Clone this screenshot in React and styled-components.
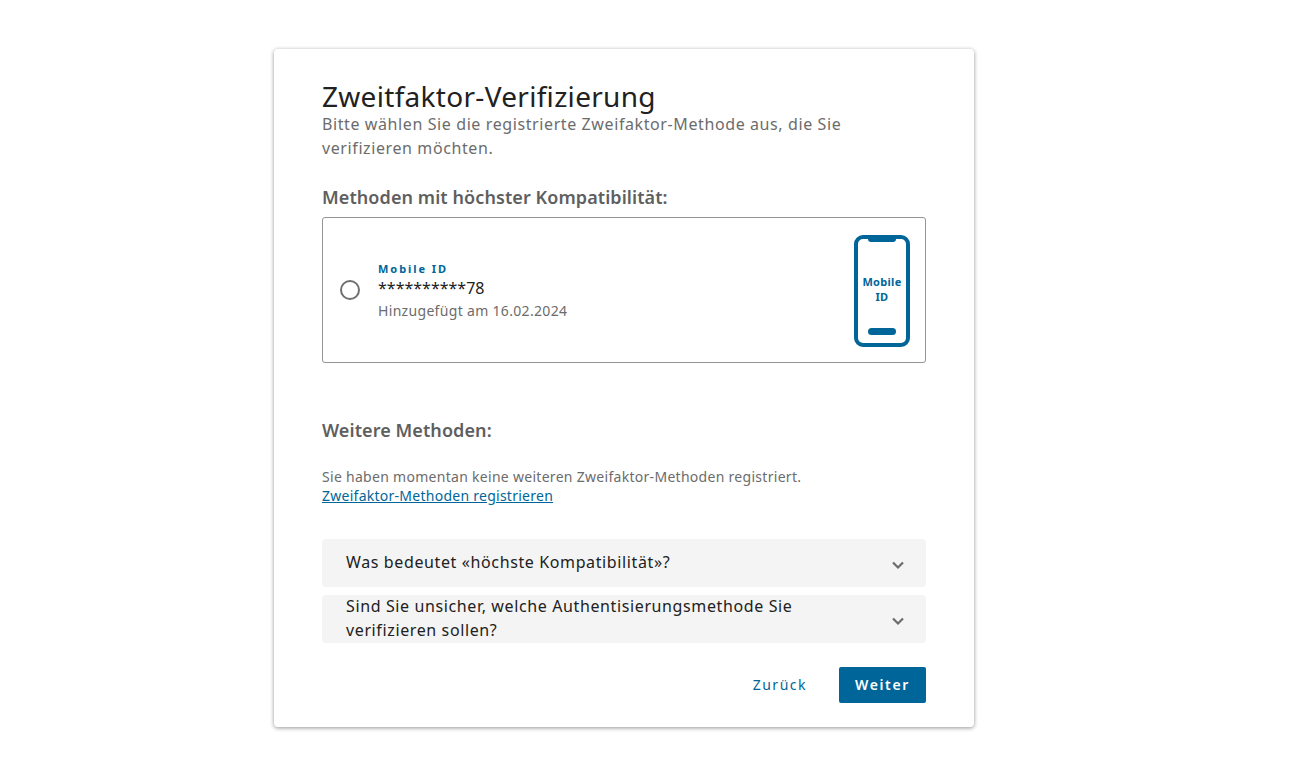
import React from "react";
import styled, { createGlobalStyle } from "styled-components";

const Global = createGlobalStyle`
  html, body { margin: 0; padding: 0; background: #fff; }
  body { font-family: "Noto Sans", "Open Sans", sans-serif; }
`;
const Page = styled.div`
  width: 100%;
  min-height: 759px;
  box-sizing: border-box;
  padding: 49px 0 0 274px;
  display: flex;
  justify-content: flex-start;
`;
const Card = styled.main`
  width: 700px;
  height: 678px;
  flex: none;
  box-sizing: border-box;
  background: #fff;
  border-radius: 4px;
  box-shadow: 0 1px 4px rgba(0,0,0,.42);
  padding: 31px 48px 24px;
  display: flex;
  flex-direction: column;
`;
const Title = styled.h1`
  margin: 0;
  font-size: 28px;
  line-height: 32px;
  font-weight: 400;
  color: #212121;
  letter-spacing: .3px;
`;
const Lead = styled.p`
  margin: 0;
  font-size: 16px;
  line-height: 24px;
  color: #6c6c6c;
  letter-spacing: .6px;
`;
const SectionTitle = styled.h2`
  margin: ${p => p.$top}px 0 0;
  font-size: 18px;
  line-height: 24px;
  font-weight: 600;
  color: #5f5f5f;
  letter-spacing: .08px;
`;
const MethodCard = styled.label`
  margin-top: 8px;
  height: 146px;
  flex: none;
  box-sizing: border-box;
  border: 1px solid #949494;
  border-radius: 3px;
  display: flex;
  align-items: center;
  padding: 0 15px 0 17px;
`;
const Radio = styled.span`
  width: 20px;
  height: 20px;
  box-sizing: border-box;
  border: 2px solid #707070;
  border-radius: 50%;
  flex: none;
`;
const MethodText = styled.div`
  flex: 1;
  margin-left: 18px;
  margin-top: 2px;
  display: flex;
  flex-direction: column;
`;
const MethodName = styled.div`
  font-size: 11px;
  line-height: 14px;
  font-weight: 700;
  letter-spacing: 1.95px;
  color: #006699;
`;
const MethodNumber = styled.div`
  font-size: 16px;
  line-height: 20px;
  margin-top: 2px;
  color: #212121;
`;
const MethodDate = styled.div`
  font-size: 14px;
  line-height: 20px;
  margin-top: 3px;
  color: #6c6c6c;
  letter-spacing: .32px;
`;
const Phone = styled.svg`
  flex: none;
  width: 56px;
  height: 112px;
  margin-top: 2px;
  display: block;
`;
const PhoneLabel = styled.text`
  font-family: "Noto Sans", sans-serif;
  font-size: 11px;
  font-weight: 700;
  letter-spacing: .3px;
  fill: #006699;
  text-anchor: middle;
`;
const Note = styled.p`
  margin: 25px 0 0;
  font-size: 14px;
  line-height: 19px;
  color: #6c6c6c;
  letter-spacing: .29px;
`;
const RegisterLink = styled.a`
  display: block;
  font-size: 14px;
  line-height: 19px;
  color: #006699;
  text-decoration: underline;
  letter-spacing: .26px;
`;
const Accordion = styled.div`
  margin-top: 34px;
  display: flex;
  flex-direction: column;
  gap: 8px;
`;
const AccordionItem = styled.div`
  height: 48px;
  flex: none;
  box-sizing: border-box;
  background: #f4f4f4;
  border-radius: 4px;
  padding: 0 20px 0 24px;
  display: flex;
  align-items: center;
  justify-content: space-between;
`;
const AccordionText = styled.span`
  max-width: 480px;
  font-size: 16px;
  line-height: 24px;
  margin-top: -2px;
  color: #212121;
  letter-spacing: .62px;
`;
const Chevron = styled.svg`
  flex: none;
  width: 16px;
  height: 16px;
  margin-top: 3px;
`;
const Actions = styled.div`
  margin-top: 24px;
  display: flex;
  justify-content: flex-end;
  align-items: center;
  gap: 32px;
`;
const BackButton = styled.button`
  border: 0;
  background: none;
  padding: 0 0 2px;
  font: 400 14px "Noto Sans", sans-serif;
  letter-spacing: 1.5px;
  color: #006699;
`;
const NextButton = styled.button`
  width: 87px;
  height: 36px;
  border: 0;
  border-radius: 2px;
  background: #006699;
  color: #fff;
  padding: 0 0 2px;
  font: 600 14px "Noto Sans", sans-serif;
  letter-spacing: 1.6px;
`;

const ChevronIcon = () => (
  <Chevron viewBox="0 0 16 16" fill="none" stroke="#6b6b6b" strokeWidth="2.2">
    <path d="M3 5.5 8 10.5 13 5.5" />
  </Chevron>
);

export default function App() {
  return (
    <Page>
      <Global />
      <Card>
        <Title>Zweitfaktor-Verifizierung</Title>
        <Lead>Bitte wählen Sie die registrierte Zweifaktor-Methode aus, die Sie verifizieren möchten.</Lead>
        <SectionTitle $top={25}>Methoden mit höchster Kompatibilität:</SectionTitle>
        <MethodCard>
          <Radio />
          <MethodText>
            <MethodName>Mobile ID</MethodName>
            <MethodNumber>**********78</MethodNumber>
            <MethodDate>Hinzugefügt am 16.02.2024</MethodDate>
          </MethodText>
          <Phone viewBox="0 0 56 112">
            <rect x="2" y="2" width="52" height="108" rx="7" fill="none" stroke="#006699" strokeWidth="4" />
            <path d="M14 2H42V4Q42 7 39 7H17Q14 7 14 4Z" fill="#006699" />
            <rect x="14" y="93" width="28" height="7" rx="3.5" fill="#006699" />
            <PhoneLabel x="28" y="51">Mobile</PhoneLabel>
            <PhoneLabel x="28" y="66">ID</PhoneLabel>
          </Phone>
        </MethodCard>
        <SectionTitle $top={55}>Weitere Methoden:</SectionTitle>
        <Note>Sie haben momentan keine weiteren Zweifaktor-Methoden registriert.</Note>
        <RegisterLink href="#">Zweifaktor-Methoden registrieren</RegisterLink>
        <Accordion>
          <AccordionItem>
            <AccordionText>Was bedeutet «höchste Kompatibilität»?</AccordionText>
            <ChevronIcon />
          </AccordionItem>
          <AccordionItem>
            <AccordionText>Sind Sie unsicher, welche Authentisierungsmethode Sie verifizieren sollen?</AccordionText>
            <ChevronIcon />
          </AccordionItem>
        </Accordion>
        <Actions>
          <BackButton>Zurück</BackButton>
          <NextButton>Weiter</NextButton>
        </Actions>
      </Card>
    </Page>
  );
}
